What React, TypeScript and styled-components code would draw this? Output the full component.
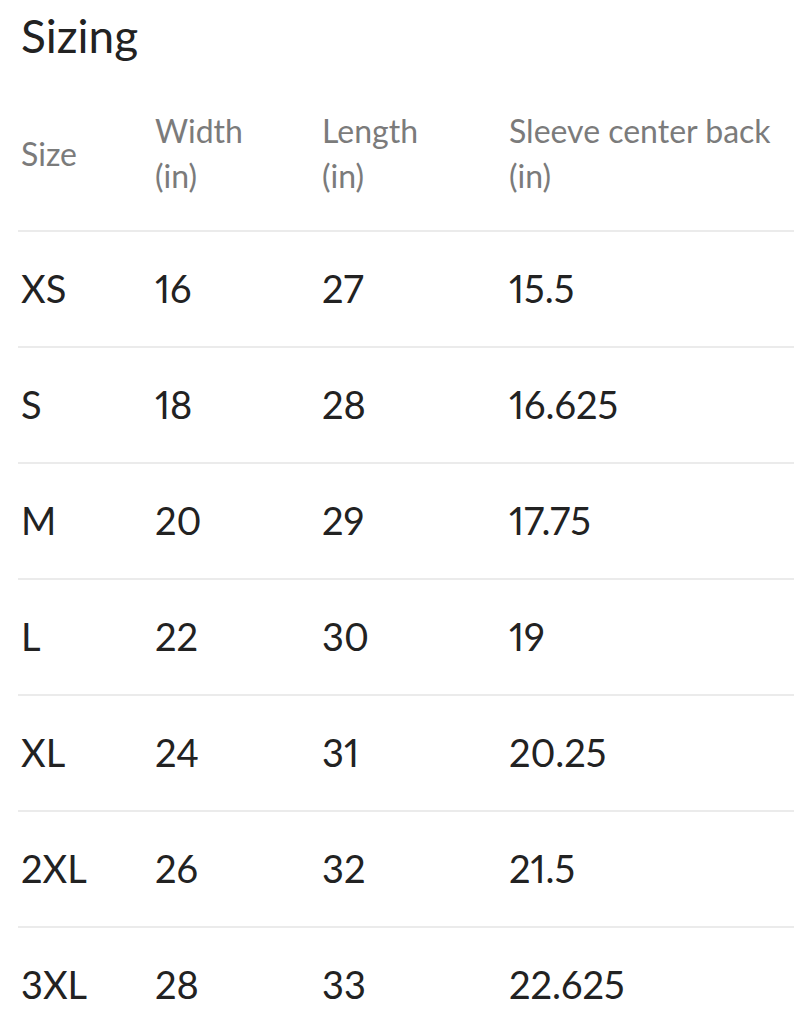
import React from 'react';
import styled, { createGlobalStyle } from 'styled-components';

const GlobalStyle = createGlobalStyle`
  html, body {
    margin: 0;
    padding: 0;
    background: #ffffff;
  }
  body {
    font-family: Lato, "Open Sans", "Liberation Sans", sans-serif;
    color: #222222;
  }
`;

const Page = styled.div`
  padding: 8px 0 0 18px;
  height: 1036px;
  overflow: hidden;
  box-sizing: border-box;
`;

const Title = styled.h2`
  margin: 0;
  padding-left: 3px;
  font-size: 46px;
  line-height: 1.2;
  font-weight: 400;
  color: #222222;
`;

const Row = styled.div<{ $header?: boolean }>`
  display: grid;
  grid-template-columns: 134px 167px 187px 1fr;
  align-items: center;
  box-sizing: border-box;
  ${({ $header }) =>
    $header
      ? `
    padding: 45px 0 32px;
    font-size: 32px;
    line-height: 45px;
    color: #7b7b7b;
  `
      : `
    height: 116px;
    border-top: 2px solid #ebebeb;
    font-size: 38px;
    line-height: 1.2;
    color: #222222;
  `}
`;

const Cell = styled.div`
  padding-left: 3px;
  font-variant-numeric: proportional-nums;
  white-space: nowrap;
`;

const Unit = styled.span`
  display: block;
`;

const headers = [
  { label: 'Size' },
  { label: 'Width', unit: '(in)' },
  { label: 'Length', unit: '(in)' },
  { label: 'Sleeve center back', unit: '(in)' },
];

const sizes = [
  ['XS', '16', '27', '15.5'],
  ['S', '18', '28', '16.625'],
  ['M', '20', '29', '17.75'],
  ['L', '22', '30', '19'],
  ['XL', '24', '31', '20.25'],
  ['2XL', '26', '32', '21.5'],
  ['3XL', '28', '33', '22.625'],
];

export default function App() {
  return (
    <>
      <GlobalStyle />
      <Page>
        <Title>Sizing</Title>
        <Row $header>
          {headers.map((h) => (
            <Cell key={h.label}>
              <Unit>{h.label}</Unit>
              {h.unit && <Unit>{h.unit}</Unit>}
            </Cell>
          ))}
        </Row>
        {sizes.map((row) => (
          <Row key={row[0]}>
            {row.map((value, i) => (
              <Cell key={i}>{value}</Cell>
            ))}
          </Row>
        ))}
      </Page>
    </>
  );
}
